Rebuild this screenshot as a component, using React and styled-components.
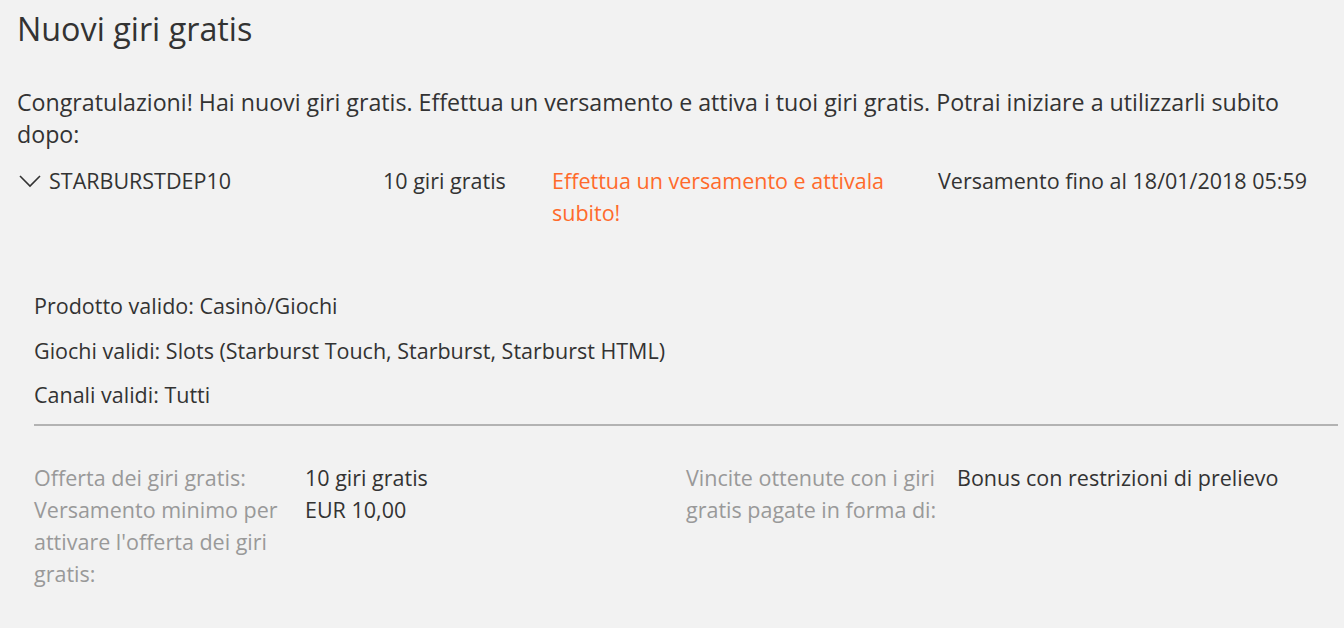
import React from "react";
import styled, { createGlobalStyle } from "styled-components";

const Global = createGlobalStyle`
  html, body { margin: 0; padding: 0; background: #f2f2f2; }
  body { font-family: "Open Sans", "Liberation Sans", sans-serif; color: #333; }
`;

const Page = styled.div`
  padding: 6px 6px 20px 17px;
`;

const Title = styled.h1`
  margin: 0;
  font-size: 32.3px;
  font-weight: 400;
  line-height: 44px;
  color: #333;
`;

const Intro = styled.p`
  margin: 36px 0 0;
  font-size: 23.2px;
  line-height: 32px;
`;

const BonusRow = styled.div`
  display: grid;
  grid-template-columns: 366px 169px 386px auto;
  margin-top: 15px;
  font-size: 21.5px;
  line-height: 32px;
`;

const Code = styled.div`
  display: flex;
  align-items: center;
  gap: 8px;
  height: 32px;
  padding-left: 2px;
`;

const Cell = styled.div`
  color: ${(p) => (p.$accent ? "#ff6a2b" : "#333")};
  padding-right: ${(p) => (p.$accent ? "40px" : "0")};
`;

const Details = styled.div`
  margin-top: 61px;
  padding-left: 17px;
`;

const InfoLine = styled.div`
  font-size: 21.5px;
  line-height: 32px;
  & + & { margin-top: 12.5px; }
`;

const Divider = styled.hr`
  margin: 13px 0 0;
  border: none;
  border-top: 2px solid #b3b3b3;
`;

const Terms = styled.div`
  display: grid;
  grid-template-columns: 652px 1fr;
  margin-top: 36px;
  font-size: 21.5px;
  line-height: 32px;
`;

const TermList = styled.dl`
  display: grid;
  grid-template-columns: 271px 1fr;
  margin: 0;
  align-content: start;
`;

const Label = styled.dt`
  color: #999;
  padding-right: 12px;
`;

const Value = styled.dd`
  margin: 0;
  color: #333;
`;

const Chevron = () => (
  <svg width="22" height="14" viewBox="0 0 22 14" fill="none">
    <path d="M1 2 L11 12 L21 2" stroke="#333" strokeWidth="1.6" />
  </svg>
);

export default function App() {
  return (
    <>
      <Global />
      <Page>
        <Title>Nuovi giri gratis</Title>
        <Intro>
          Congratulazioni! Hai nuovi giri gratis. Effettua un versamento e attiva i tuoi giri gratis. Potrai
          iniziare a utilizzarli subito dopo:
        </Intro>
        <BonusRow>
          <Code>
            <Chevron />
            <span>STARBURSTDEP10</span>
          </Code>
          <Cell>10 giri gratis</Cell>
          <Cell $accent>Effettua un versamento e attivala subito!</Cell>
          <Cell>Versamento fino al 18/01/2018 05:59</Cell>
        </BonusRow>
        <Details>
          <InfoLine>Prodotto valido: Casinò/Giochi</InfoLine>
          <InfoLine>Giochi validi: Slots (Starburst Touch, Starburst, Starburst HTML)</InfoLine>
          <InfoLine>Canali validi: Tutti</InfoLine>
          <Divider />
          <Terms>
            <TermList>
              <Label>Offerta dei giri gratis:</Label>
              <Value>10 giri gratis</Value>
              <Label>Versamento minimo per attivare l'offerta dei giri gratis:</Label>
              <Value>EUR 10,00</Value>
            </TermList>
            <TermList>
              <Label>Vincite ottenute con i giri gratis pagate in forma di:</Label>
              <Value>Bonus con restrizioni di prelievo</Value>
            </TermList>
          </Terms>
        </Details>
      </Page>
    </>
  );
}
